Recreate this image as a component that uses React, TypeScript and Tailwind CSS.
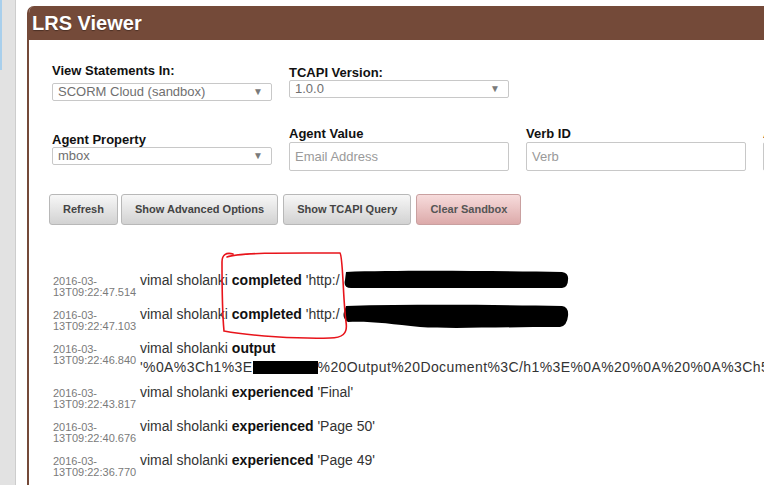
import React from "react";

type Statement = {
  date: string;
  time: string;
  verb: string;
  object?: string;
};

const statements: Statement[] = [
  { date: "2016-03-", time: "13T09:22:47.514", verb: "completed", object: "'http:/" },
  { date: "2016-03-", time: "13T09:22:47.103", verb: "completed", object: "'http:/" },
  { date: "2016-03-", time: "13T09:22:46.840", verb: "output" },
  { date: "2016-03-", time: "13T09:22:43.817", verb: "experienced", object: "'Final'" },
  { date: "2016-03-", time: "13T09:22:40.676", verb: "experienced", object: "'Page 50'" },
  { date: "2016-03-", time: "13T09:22:36.770", verb: "experienced", object: "'Page 49'" },
];

const FakeSelect = ({ value }: { value: string }) => (
  <div className="flex h-[18px] w-[220px] items-center justify-between rounded-[2px] border border-[#c8c8c8] bg-white pl-[5px] pr-[8px] text-[13px] leading-[16px] text-[#6f6f6f]">
    <span>{value}</span>
    <span className="text-[10px] leading-[10px] text-[#7a7a7a]">▼</span>
  </div>
);

const FakeInput = ({ placeholder }: { placeholder: string }) => (
  <div className="flex h-[29px] w-[220px] items-center rounded-[2px] border border-[#c8c8c8] bg-white pl-[5px] text-[13px] text-[#9a9a9a]">
    {placeholder}
  </div>
);

const Button = ({ label, danger }: { label: string; danger?: boolean }) => (
  <button
    className={
      danger
        ? "h-[31px] rounded-[3px] border border-[#c9a0a0] bg-linear-to-b from-[#f7dcdc] to-[#dcaaaa] px-[13px] text-[11px] font-bold text-[#555]"
        : "h-[31px] rounded-[3px] border border-[#b8b8b8] bg-linear-to-b from-[#f7f7f7] to-[#d2d2d2] px-[13px] text-[11px] font-bold text-[#444]"
    }
  >
    {label}
  </button>
);

export default function App() {
  return (
    <div
      className="relative flex h-[485px] w-[764px] overflow-hidden bg-white"
      style={{ fontFamily: '"Liberation Sans", Arial, sans-serif' }}
    >
      {/* side strip */}
      <div className="relative h-full w-[16px] shrink-0 border-r border-[#cdcdcd] bg-[#e2e2e2]">
        <div className="absolute left-0 top-0 h-[70px] w-[2px] bg-[#a8cfec]" />
      </div>

      <div className="flex-1 pl-[11px] pt-[6px]">
        <div className="h-full w-[760px] overflow-hidden rounded-tl-[7px] border-l-2 border-[#744a39]">
          <div className="h-[34px] bg-[#744a39] pl-[3px] text-[20px] font-bold leading-[34px] text-white [text-shadow:0_1px_1px_rgba(0,0,0,0.35)]">
            LRS Viewer
          </div>

          <div className="pl-[23px]">
            {/* row 1 */}
            <div className="flex gap-[17px] pt-[23px]">
              <div className="w-[220px]">
                <div className="text-[13px] font-bold leading-[15px] text-[#111]">View Statements In:</div>
                <div className="mt-[5px]">
                  <FakeSelect value="SCORM Cloud (sandbox)" />
                </div>
              </div>
              <div className="w-[220px]">
                <div className="mt-[2px] text-[13px] font-bold leading-[15px] text-[#111]">TCAPI Version:</div>
                <FakeSelect value="1.0.0" />
              </div>
            </div>

            {/* row 2 */}
            <div className="mt-[25px] flex gap-[17px]">
              <div className="w-[220px] shrink-0">
                <div className="mt-[6px] text-[13px] font-bold leading-[15px] text-[#111]">Agent Property</div>
                <FakeSelect value="mbox" />
              </div>
              <div className="w-[220px] shrink-0">
                <div className="text-[13px] font-bold leading-[15px] text-[#111]">Agent Value</div>
                <div className="mt-[1px]">
                  <FakeInput placeholder="Email Address" />
                </div>
              </div>
              <div className="w-[220px] shrink-0">
                <div className="text-[13px] font-bold leading-[15px] text-[#111]">Verb ID</div>
                <div className="mt-[1px]">
                  <FakeInput placeholder="Verb" />
                </div>
              </div>
              <div className="w-[220px] shrink-0">
                <div className="text-[13px] font-bold leading-[15px] text-[#111]">Activity ID</div>
                <div className="mt-[1px]">
                  <FakeInput placeholder="Activity" />
                </div>
              </div>
            </div>

            {/* buttons */}
            <div className="-ml-[3px] mt-[23px] flex gap-[5px]">
              <Button label="Refresh" />
              <div className="-ml-[2px]">
                <Button label="Show Advanced Options" />
              </div>
              <Button label="Show TCAPI Query" />
              <Button label="Clear Sandbox" danger />
            </div>

            {/* statements */}
            <div className="mt-[42px] pl-[1px]">
              {statements.map((s, i) => (
                <div key={i} className="flex items-baseline pb-[3px] pt-[4px]">
                  <div className="w-[87px] shrink-0 text-[11px] leading-[11px] text-[#7a7a7a]">
                    {s.date}
                    <br />
                    {s.time}
                  </div>
                  <div className="min-w-0 flex-1 text-[14px] leading-[18px] text-[#333]">
                    vimal sholanki <b className="text-[#111]">{s.verb}</b>
                    {s.object && <> {s.object}</>}
                    {s.verb === "output" && (
                      <div className="mt-[1px] whitespace-nowrap tracking-[0.4px]">
                        '%0A%3Ch1%3E
                        <span className="inline-block h-[13px] w-[65px] bg-black align-[-2px]" />
                        %20Output%20Document%3C/h1%3E%0A%20%0A%20%0A%3Ch5%3E
                      </div>
                    )}
                  </div>
                </div>
              ))}
            </div>
          </div>
        </div>
      </div>

      {/* annotations drawn over the screenshot */}
      <svg className="pointer-events-none absolute left-0 top-0" width="764" height="485" viewBox="0 0 764 485">
        <path
          d="M346 272 C400 270 500 271 562 272 Q569 273 568 280 Q568 287 562 288 L351 288 Q343 288 345 280 Z"
          fill="#000"
        />
        <path
          d="M346 306 C420 304 500 305 562 306 Q569 307 568 316 Q567 326 560 327 C500 327 450 329 420 327 C390 324 370 321 348 322 Q342 318 344 312 Z"
          fill="#000"
        />
        <path
          d="M227 257 C240 252 300 253 340 253 C343 256 343 300 346 322 C348 334 342 338 330 338 C300 339 250 336 224 331 C222 310 222 280 222 262 C222 255 226 252 233 254"
          fill="none"
          stroke="#e8141b"
          strokeWidth="1.6"
          strokeLinecap="round"
        />
      </svg>
    </div>
  );
}
